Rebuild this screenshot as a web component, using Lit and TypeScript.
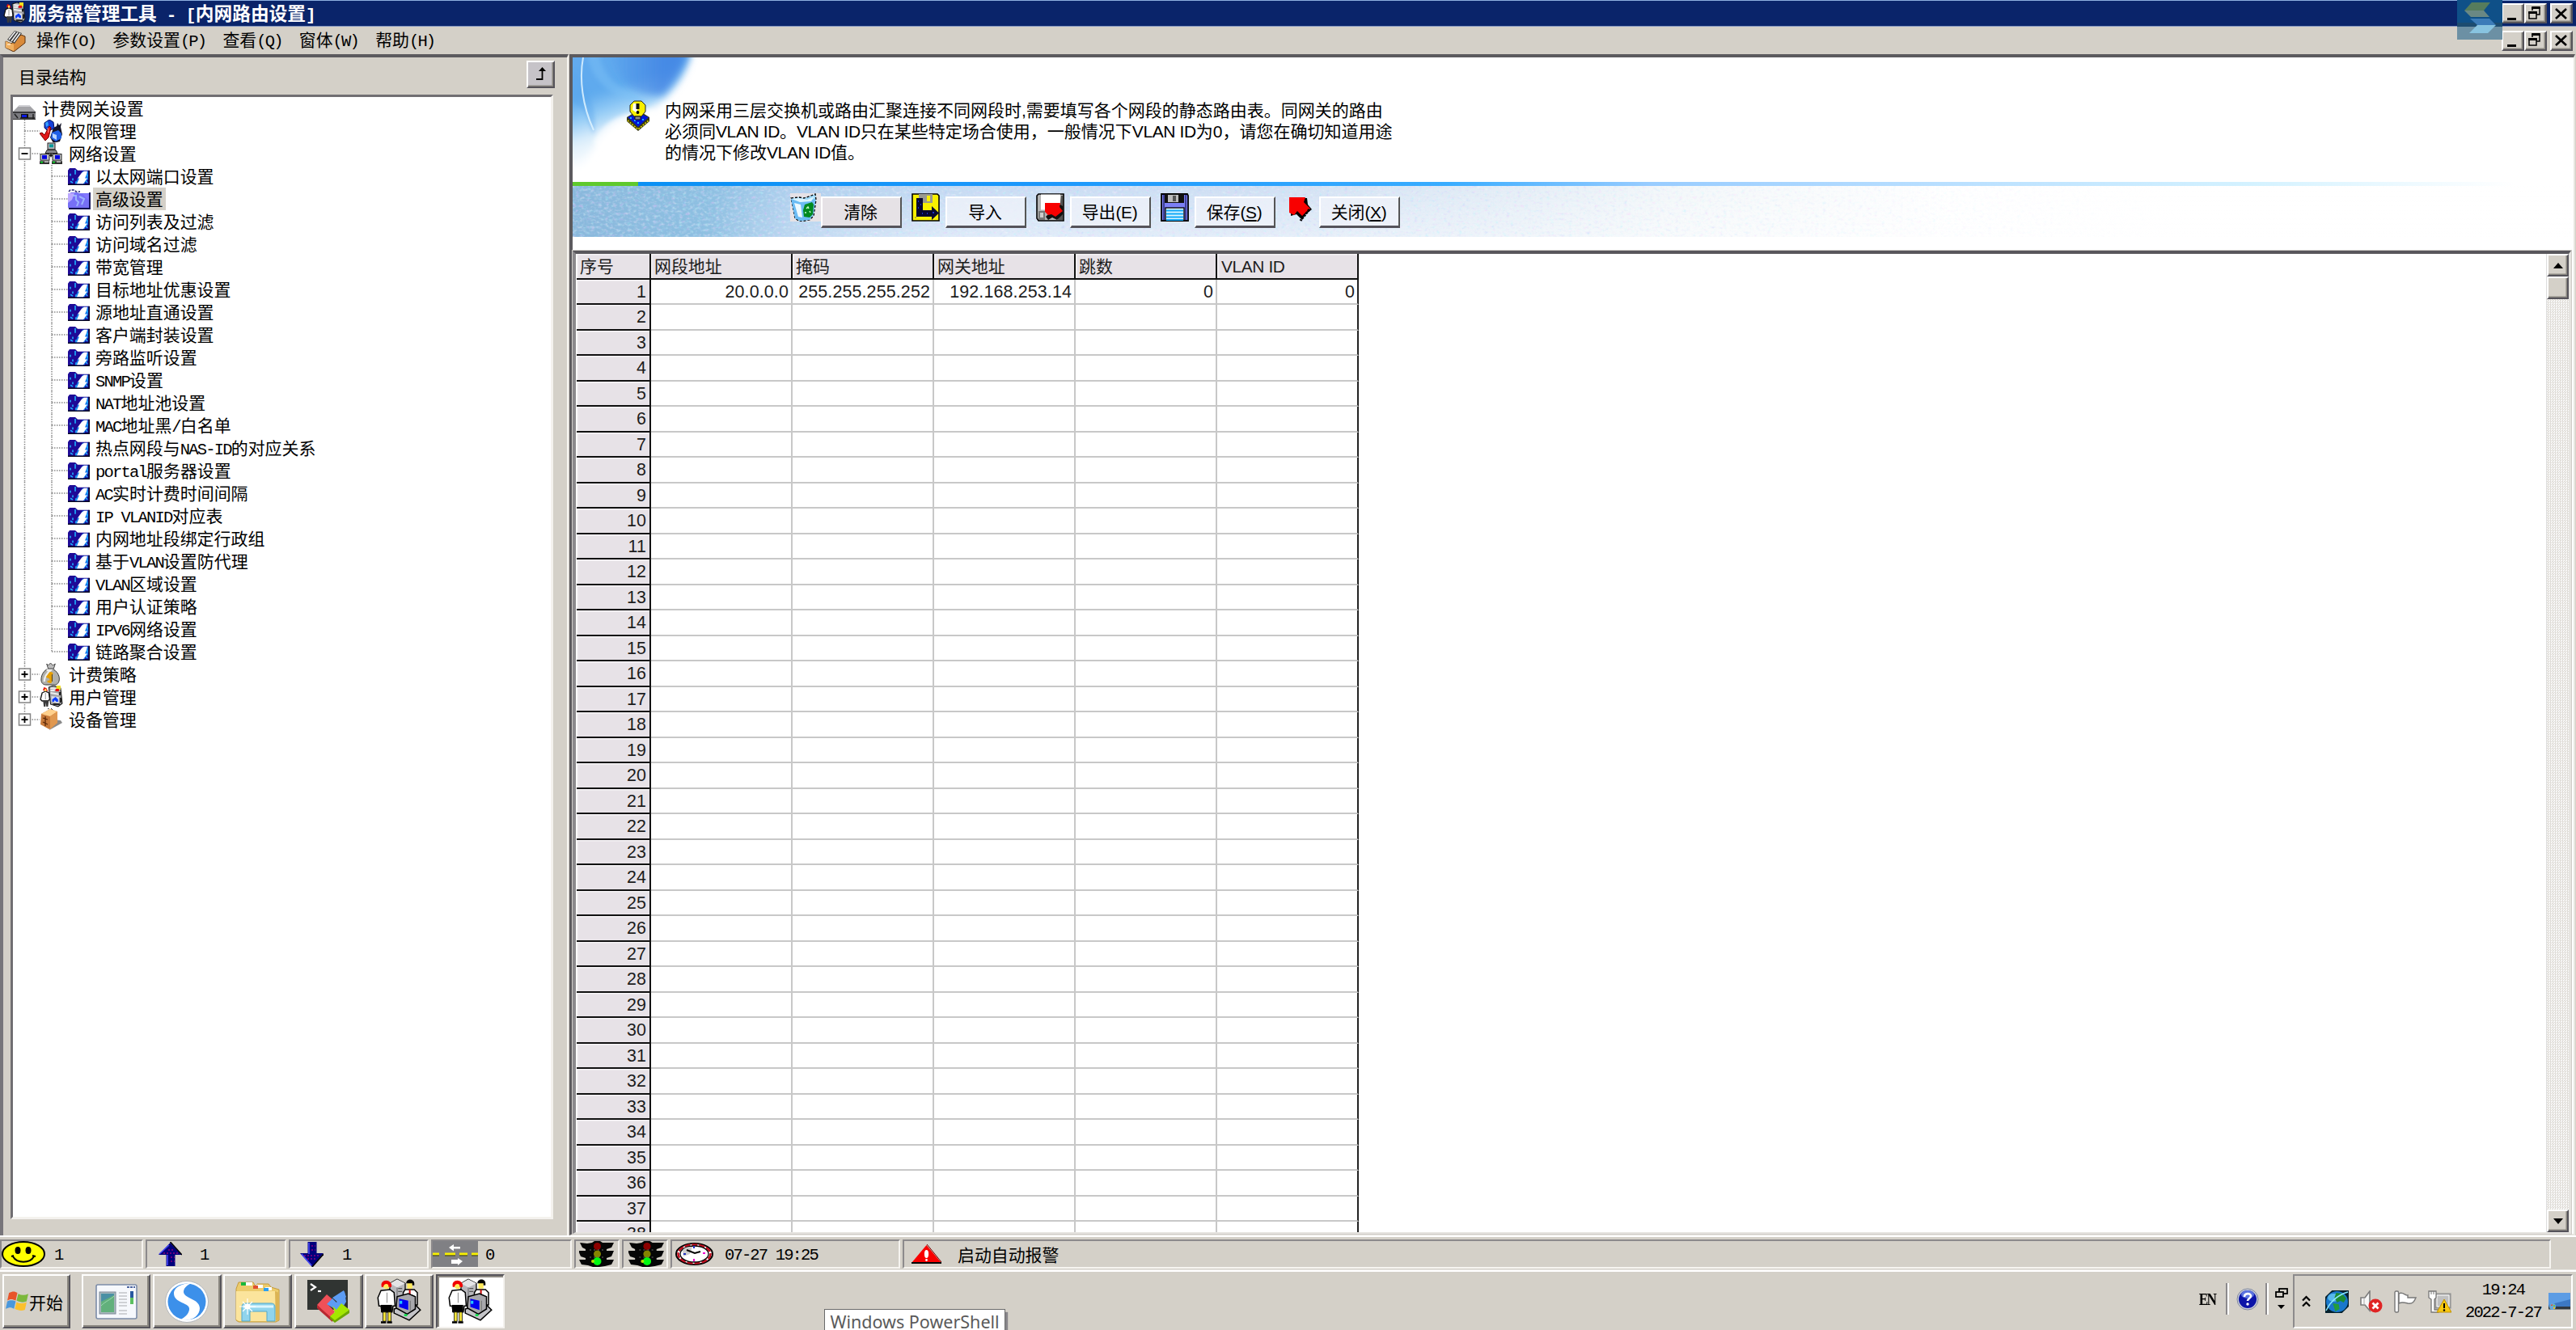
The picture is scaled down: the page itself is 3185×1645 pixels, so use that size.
import { LitElement, html, svg, css } from "lit";
import { customElement } from "lit/decorators.js";
import { classMap } from "lit/directives/class-map.js";

/** Splits a label so that Latin runs are set in half-width characters. */
const mix = (text: string) =>
  text
    .split(/([\x20-\x7e]+)/)
    .filter((s) => s !== "")
    .map((s) => (/^[\x20-\x7e]+$/.test(s) ? html`<span class="half">${s}</span>` : s));

const clerks = svg`
  <path d="M13 5l7-4 8 4v18l-8 5-8-5z" fill="#b8b8bc" stroke="#000" stroke-width="1"/>
  <path d="M13 5l7 4 8-4-8-4z" fill="#e4e4e6"/><path d="M20 9v18" stroke="#77777c"/>
  <path d="M21 10h4M21 13h4" stroke="#555"/>
  <path d="M28 11h9l3 3v12H26V14z" fill="#fff" stroke="#000" stroke-width="1.2"/>
  <rect x="30" y="4" width="5" height="6" fill="#ffe95a"/><path d="M29 5c0-5 8-5 8 0v2h-2V5h-4z" fill="#000"/>
  <path d="M32.5 11v8" stroke="#c00000" stroke-width="1.6"/>
  <path d="M17 30l20-5 6 6-11 10-15-7z" fill="#c4c4c8" stroke="#000" stroke-width="1.2"/>
  <path d="M20 18l11-3 7 3v12l-8 5-11-6z" fill="#a8a8ac" stroke="#000" stroke-width="1.2"/>
  <path d="M22 20l9 2v9l-9-3z" fill="#0000f0"/><rect x="22.500" y="22" width="2.500" height="3" fill="#20c8ff"/>
  <path d="M33 22v10" stroke="#777"/><rect x="27" y="35" width="3" height="2" fill="#00e040"/>
  <path d="M4 12l-3 7 1 8h2l1 6h10l1-6h2l-1-13-4-3z" fill="#fff" stroke="#000" stroke-width="1.2"/>
  <circle cx="9.500" cy="7" r="3.500" fill="#ffe95a"/><path d="M5 8C3 1 15 1 14 8h-2c0-4-5-4-6 0z" fill="#f00000" stroke="#f00000"/>
  <path d="M10 14v10" stroke="#999"/><rect x="4" y="26" width="11" height="7" fill="#000"/>
  <path d="M6 33h3v9H6zM11 33h3v9h-3z" fill="#f5e63c" stroke="#000" stroke-width=".6"/>
  <path d="M4 42h5v2H4zM10 42h5v2h-5z" fill="#000"/>`;

const icons: Record<string, { box: string; art: unknown }> = {
  clerks: { box: "0 0 44 45", art: clerks },
  users: {
    box: "0 0 28 28",
    art: svg`<path d="M11 2l6-2 8 3 2 19-5 4-9-3z" fill="#a4a4a8" stroke="#111"/>
      <path d="M13 3l7 1M13 9l11 2M13 6h5" stroke="#eee" stroke-width="2"/><path d="M24 8v4M25 15v6M16 23h8" stroke="#222" stroke-width="2"/>
      <rect x="20" y="0" width="5" height="5" fill="#f5e020"/><rect x="19" y="4" width="4" height="3" fill="#e00"/>
      <path d="M14 13l9 1v8l-9-2z" fill="#d8dce8"/><path d="M15 17l4-3 3 3v3h-2l-2-2-1 2h-2z" fill="#0a3cff"/>
      <path d="M3 9l4-2 4 2 1 8-2 2H3l-2-2z" fill="#fff" stroke="#111" stroke-width="1.300"/><path d="M7 9v8" stroke="#999"/>
      <path d="M4 6l1-4 3 1 2 4z" fill="#e01010"/><rect x="6" y="4" width="2" height="3" fill="#ffe04a"/>
      <path d="M4 18h7l-1 8H8l-.5-5L7 26H5z" fill="#3a3a3a"/>`,
  },
  menu: {
    box: "0 0 26 27",
    art: svg`<path d="M1 14l7 3 12-11 5 2v8L11 27 1 22z" fill="#d98a3a" stroke="#5a3210"/>
      <path d="M8 17l3 1v8L1 22v-8z" fill="#f0b060"/><path d="M3 12L12 1l9 3-9 13z" fill="#3b3b3b"/>
      <path d="M5 12l8-10M8 14l8-11M11 15l8-11" stroke="#f4f4f4" stroke-width="1.500"/>
      <path d="M3 18h4" stroke="#fff"/>`,
  },
  server: {
    box: "0 0 28 18",
    art: svg`<path d="M0 8L8 0h12l8 8z" fill="#a4a4a8"/><path d="M8 0h12l2 2H6z" fill="#d0d0d4"/>
      <rect x="0" y="8" width="28" height="9" fill="#7b7b80"/><path d="M0 8h28v2H0z" fill="#3b3b3e"/>
      <path d="M2 11l4 5M25 11v6M9 16h18" stroke="#222" stroke-width="1.500"/>
      <rect x="10" y="11" width="9" height="5" fill="#111"/><rect x="11" y="12" width="6" height="3" fill="#0a18e0"/>
      <path d="M0 17.500h28" stroke="#333"/>`,
  },
  rights: {
    box: "0 0 28 28",
    art: svg`<path d="M17 10l4-2 1-4 2 3 3-3-1 5 2 9-3 9-8 2-4-7z" fill="#141428"/>
      <path d="M6 4l6-4 5 3 1 8-8 3-4-4z" fill="#1540d8" stroke="#001060"/><path d="M7 4l3-2 1 5-3 2z" fill="#36a0ff"/>
      <path d="M15 16l8-3 4 4v6l-7 4-6-4z" fill="#2060e8"/><path d="M16 17l5 2v6l-5-3z" fill="#b8d4ff"/>
      <path d="M0 17l3-1 3 3 6-11 2 2-3 12-4 4z" fill="#e01818" stroke="#700"/><path d="M10 10l1 6" stroke="#ff9090"/>`,
  },
  network: {
    box: "0 0 28 29",
    art: svg`<rect x="10" y="1" width="9" height="8" fill="#b8b8bc" stroke="#222"/><rect x="12" y="2.500" width="5" height="4" fill="#0a9a9a"/>
      <path d="M9 10h11l2 4H7z" fill="#8a8a90" stroke="#222"/><path d="M14 14v5M7 20l7-4 7 4" stroke="#111" stroke-width="1.500" fill="none"/>
      <rect x="1" y="15" width="11" height="8" fill="#c0c0c4" stroke="#222"/><rect x="3" y="16.500" width="6" height="5" fill="#0000e0"/>
      <rect x="16" y="15" width="11" height="8" fill="#c0c0c4" stroke="#222"/><rect x="19" y="16.500" width="6" height="5" fill="#0000e0"/>
      <path d="M0 24h12v4H0zM15 24h13v4H15z" fill="#303030"/><path d="M1 25.500h3M16 25.500h3" stroke="#00d020" stroke-width="2"/>
      <path d="M6 25h5M21 25h5" stroke="#ddd" stroke-width="1.500"/>`,
  },
  leaf: {
    box: "0 0 27 24",
    art: svg`<path d="M2 1h7l3 3h14v19H0V4z" fill="#1e0a96"/><path d="M0 23h27V4h-1.500v17.500H0z" fill="#050520"/>
      <path d="M18 5h7v11l-3 1-1 4H9l3-7 3-2z" fill="#1478ec"/><path d="M17 7l3-2h4l-1 4-2 5h3l-5 7h-8l3-7h-2z" fill="#fff"/>
      <path d="M9 3v6M3 8v3M6 14v3M3 18l3 2M10 18v3M24 9v3M22 17l2 3" stroke="#1fb0ff" stroke-width="1.600"/>`,
  },
  folder: {
    box: "0 0 28 25",
    art: svg`<path d="M1 3l2-2h5l2 2h5" stroke="#222070" stroke-width="1.500" fill="none" stroke-dasharray="3 1.500"/>
      <path d="M0 5h2l2-1h8l2 1h13v18H0z" fill="#7670f6"/><path d="M0 5h8l-3 8-5 4z" fill="#bca8ff"/>
      <path d="M6 8h4v5l3 3-2 5M14 9l6 3-3 7" stroke="#a8c4ff" stroke-width="2" fill="none" opacity=".8"/>
      <path d="M18 6h8v8z" fill="#8478ff"/><path d="M1 24h26V4" stroke="#0a0a50" stroke-width="1.800" fill="none"/>`,
  },
  money: {
    box: "0 0 28 28",
    art: svg`<path d="M9 1l2 2 3-3 3 3 3-2-2 6h-7z" fill="#bdbdbd" stroke="#444"/>
      <path d="M9 8h9c6 4 8 9 7 14-1 4-4 5-6 5H8c-3 0-6-2-6-6C2 16 4 11 9 8z" fill="#b0b0ac" stroke="#333"/>
      <path d="M9 9h5c-5 4-8 9-8 14" stroke="#eee" stroke-width="2.500" fill="none"/>
      <path d="M17 13h-4l-3 4 5 2-1 4h-4M14 11v14" stroke="#e8a000" stroke-width="2.600" fill="none"/><path d="M16 14v9" stroke="#5a3c00"/>`,
  },
  crate: {
    box: "0 0 28 28",
    art: svg`<path d="M12 27l16-9-2-3-9-1z" fill="#8a8a8a"/>
      <path d="M2 7l11-6 9 3v14l-10 8-11-6z" fill="#c87a3a"/><path d="M2 7l11-6 9 3-9 6z" fill="#ffd08c"/>
      <path d="M13 10l9-6v14l-9 8z" fill="#e09850"/><path d="M10 1l3-2 3 3" stroke="#333" fill="none"/>
      <path d="M4 12l6 2M4 17l6 3M7 10v12" stroke="#5a2808" stroke-width="1.300"/>`,
  },
  notice: {
    box: "0 0 28 39",
    art: svg`<path d="M0 22l8-5 6 5 6-5 8 5v5L14 39 0 27z" fill="#3a3a10"/><path d="M1 22l7-3 6 6 6-6 7 3-13 12z" fill="#0018d8"/>
      <path d="M1 26l13 11 13-11" stroke="#e0d800" fill="none" stroke-width="1.500" stroke-dasharray="2 1.500"/>
      <path d="M4 23h2M9 26h2M19 25h2M13 29h2" stroke="#20b0ff" stroke-width="2"/>
      <path d="M9 2h9l5 5v8l-5 6h-9l-5-6V7z" fill="#f8f000" stroke="#222"/><path d="M8 5h5v12l-6-4z" fill="#fff"/>
      <path d="M13.500 5v7" stroke="#111" stroke-width="4"/><circle cx="13.500" cy="16" r="1.900"/><path d="M10 21h7v4h-7z" fill="#888" stroke="#111"/>`,
  },
  recycle: {
    box: "0 0 33 35",
    art: svg`<path d="M1 6l10-1 6 1 9-3 5-2 1 7-3 20-5 5-12 2-6-4z" fill="#9cd8f8" stroke="#000" stroke-width="1.300" stroke-dasharray="3 2"/>
      <path d="M1 7l12 4 18-4-2 17-5 9-12 1-6-3z" fill="#6cbcf4"/><path d="M5 12l8 2 2 16-5-1z" fill="#eefaff"/>
      <path d="M2 7l9-1 10 2 9-4-4 6-14 1z" fill="#dcf4ff"/>
      <path d="M18 14l9-3 2 3-1 12-4 4-7-1-1-8z" fill="#008a20"/><path d="M20 19l2-2 1 2M18 24h2M24 22l1 2" stroke="#c8ffd0" stroke-width="1.500" fill="none"/>`,
  },
  importDisk: {
    box: "0 0 35 35",
    art: svg`<path d="M1 1h31l2 2v31H1z" fill="#f8f000" stroke="#000" stroke-width="1.600"/>
      <path d="M9 1h17v11H9z" fill="#9a9a90"/><rect x="19" y="3" width="4" height="7" fill="#f8f000"/>
      <path d="M6 6h8v15h11v-5l9 8.500-9 8.500v-4H6z" fill="#080830"/><path d="M8 10h1M11 14h1M8 18h1M13 25h1M19 25h1M26 24h2" stroke="#2040ff" stroke-width="1.500"/>
      <path d="M4 30h2" stroke="#777"/>`,
  },
  exportDisk: {
    box: "0 0 35 35",
    art: svg`<path d="M3 1h31v33H3l-2-3V3z" fill="#b4b4b4" stroke="#000" stroke-width="1.600"/>
      <path d="M6 1.500h24v19H6z" fill="#fff"/><path d="M3 22h8v11H3z" fill="#777"/><path d="M5 24h4v6H5z" fill="#ccc"/>
      <path d="M31 3h2v30h-6z" fill="#555"/><path d="M13 14h17l3 2v10l-7 7-6-3-5 3-3-4 4-4z" fill="#111"/>
      <path d="M11 12h19l-1 5 4 5-9 7-5-3-4 1-4-4z" fill="#f80000"/>`,
  },
  floppy: {
    box: "0 0 35 35",
    art: svg`<path d="M1 1h32l1 2v31H1z" fill="#7c80f4" stroke="#000" stroke-width="1.800"/>
      <rect x="5" y="1" width="24" height="11" fill="#111"/><rect x="9" y="2" width="13" height="9" fill="#bcbcbc"/><rect x="15" y="3" width="4" height="7" fill="#555"/>
      <path d="M4 1v33M31 1v33" stroke="#000038"/><rect x="6" y="18" width="23" height="16" fill="#d8f4ff" stroke="#000" stroke-width="1.300"/>
      <path d="M7 21.500h21M7 25.500h21M7 29.500h21M7 33h21" stroke="#10a8f8" stroke-width="2"/>`,
  },
  exit: {
    box: "0 0 28 31",
    art: svg`<path d="M2 2h20l1 8 5 6-9 7-3 6-7-7-7 2z" fill="#000"/><path d="M0 1h20l-2 6 8 8-10 9-6-6-4 5-6-3z" fill="#f80000"/>
      <path d="M25 16l-9 11-2 3" stroke="#000" stroke-width="3" stroke-dasharray="3 1" fill="none"/>`,
  },
  smile: {
    box: "0 0 54 32",
    art: svg`<ellipse cx="27" cy="16" rx="26" ry="15" fill="#ffff00" stroke="#000" stroke-width="2"/>
      <ellipse cx="20" cy="11.500" rx="3.500" ry="4.500"/><ellipse cx="33" cy="11.500" rx="3.500" ry="4.500"/>
      <path d="M14 19c5 9 21 9 26 0M12 19l3-1M38 18l4 1" stroke="#000" stroke-width="2" fill="none"/>`,
  },
  up: {
    box: "0 0 29 30",
    art: svg`<path d="M14.500 1L29 16H20.500V30H9.500V16H0z" fill="#00007c"/><path d="M14.500 0L29 16" stroke="#000" stroke-width="1.500"/>
      <path d="M1 15L13 4M11 16v13" stroke="#4848f8" stroke-width="1.600"/><path d="M12 10h8M6 14h18M15 19h5M15 24h5" stroke="#8c007c" stroke-width="1.400" stroke-dasharray="2 2"/>`,
  },
  down: {
    box: "0 0 29 31",
    art: svg`<path d="M9.500 0H20.500V14H29L15 31 0 14H9.500z" fill="#00007c"/><path d="M29 15L15 31" stroke="#000" stroke-width="1.500"/>
      <path d="M11 1v14M2 15l12 14" stroke="#4848f8" stroke-width="1.600"/><path d="M14 5h5M14 10h5M5 17h19M9 21h11" stroke="#8c007c" stroke-width="1.400" stroke-dasharray="2 2"/>`,
  },
  road: {
    box: "0 0 56 32",
    art: svg`<rect width="56" height="32" fill="#808084"/><path d="M0 16h8M15 16h13M33 16h10M48 16h8" stroke="#f8f000" stroke-width="3"/>
      <path d="M0 18h8M15 18h13M33 18h10M48 18h8" stroke="#404000" stroke-width="1"/>
      <path d="M20 8l6-4v3h8v2.500h-8v3z" fill="#fff"/><path d="M37 25l-6-4v2h-8v5h8v2z" fill="#fff"/>`,
  },
  signal: {
    box: "0 0 45 32",
    art: svg`<path d="M10 3l6-1 3-2h7l3 2 14 0-3 6-6 2v2h9l-3 7-6 2v2h9l-3 6-8 2-7 1-3 1-5-1-6-2-8-1-3-6h8v-2l-6-2-3-7h9v-2L4 8 1 2z" fill="#060606"/>
      <circle cx="22.500" cy="6.500" r="4.500" fill="#8c0000"/><circle cx="22.500" cy="16" r="4.500" fill="#848400"/>
      <circle cx="22.500" cy="25" r="5" fill="#00f810"/><circle cx="17" cy="25" r="2" fill="#b4e000"/>
      <path d="M13 11h18M13 20h18" stroke="#666" stroke-dasharray="2 3"/>`,
  },
  clock: {
    box: "0 0 47 28",
    art: svg`<ellipse cx="23.500" cy="14" rx="22.500" ry="13" fill="#fff" stroke="#000" stroke-width="2"/>
      <ellipse cx="23.500" cy="14" rx="20" ry="11.500" fill="#fff" stroke="#c01020" stroke-width="2.600" stroke-dasharray="7 2"/>
      <ellipse cx="23.500" cy="14" rx="17.500" ry="10" fill="#fff" stroke="#000" stroke-width="1.300"/>
      <path d="M9 9c3-4 8-4 12-4l-3 9-8 3z" fill="#ccc"/>
      <path d="M14 9l10 4 7-2" stroke="#000" stroke-width="2" fill="none"/>
      <path d="M23 4v3M10 14h3" stroke="#2030c0" stroke-width="2"/><path d="M34 13h3M23 20v3" stroke="#f000d0" stroke-width="2"/>`,
  },
  alarm: {
    box: "0 0 37 24",
    art: svg`<path d="M18.500 1L37 23H0z" fill="#f80000"/><path d="M0 23h37" stroke="#000" stroke-width="2"/><path d="M19 0l18 22" stroke="#700" stroke-width="1"/>
      <ellipse cx="18.500" cy="12" rx="2.600" ry="5" fill="#fff"/><circle cx="18.500" cy="19.500" r="1.400" fill="#fff"/>`,
  },
  windows: {
    box: "0 0 28 26",
    art: svg`<path d="M4 3c4-2 7-2 10 0l-2 9c-4-2-7-2-10 0z" fill="#e8552a"/><path d="M15 4c4 2 8 2 12 0l-2 9c-4 2-8 1-12-1z" fill="#7cb83c"/>
      <path d="M2 13c4-2 7-1 10 0l-2 9c-3-2-6-2-10 0z" fill="#4a98dc"/><path d="M13 14c4 2 8 2 12 0l-2 9c-4 2-8 1-12-1z" fill="#fbc02c"/>`,
  },
  appWindow: {
    box: "0 0 52 44",
    art: svg`<rect x="1" y="1" width="50" height="42" rx="2" fill="#f6f8fc" stroke="#7c8ca8" stroke-width="1.600"/>
      <path d="M39 4h3M43 4h3M47 4h2" stroke="#4c64a0" stroke-width="2"/><rect x="5" y="10" width="20" height="27" fill="#a8b8bc" stroke="#7c8898"/>
      <path d="M7 12h16v23H7z" fill="#4a90a4"/><path d="M7 22l16-8v21H7z" fill="#62b07c"/><path d="M7 27c6-6 11-7 16-12" stroke="#9cd8b0" fill="none"/>
      <path d="M29 11h10M29 15h10M29 19h10M29 23h10M29 27h10M29 33h10M29 37h10" stroke="#c2c4c8" stroke-width="1.500"/>
      <rect x="43" y="9" width="4" height="10" fill="#2858a0"/><rect x="43" y="17" width="4" height="8" fill="#5cc060"/>`,
  },
  sogou: {
    box: "0 0 54 52",
    art: svg`<ellipse cx="27" cy="26" rx="26.500" ry="25.500" fill="#fff" stroke="#b4b8bc"/><ellipse cx="27" cy="26" rx="23.500" ry="22.500" fill="#3c90ea"/>
      <path d="M33 3c-10 0-22 4-22 13 0 12 21 11 19 20-1 6-6 9-10 12 12 3 23-4 23-14 0-12-21-12-20-21 1-5 5-8 10-10z" fill="#fff"/>`,
  },
  explorer: {
    box: "0 0 56 52",
    art: svg`<path d="M1 10l3-8h18l3 5 2-3h14l3 4 10 3v38l-4 2H4l-3-2z" fill="#eccb6c" stroke="#c49c3c"/>
      <path d="M1 13h48l2 4v33H5l-4-2z" fill="#fbe49c"/><path d="M49 13l5 2v33l-4 2z" fill="#dcb454"/>
      <path d="M12 4h9M26 7h8M37 10h8" stroke="#fff" stroke-width="4"/>
      <rect x="7" y="2" width="6" height="4" fill="#18b83c"/><rect x="22" y="6" width="6" height="4" fill="#e05030"/><rect x="35" y="9" width="6" height="4" fill="#2ca0f0"/>
      <path d="M8 33c0-4 2-5 5-5h31c4 0 5 2 5 5v17H39V38H18v12H8z" fill="#90d4ec" stroke="#50a8cc"/><path d="M10 32h37" stroke="#dcf6ff" stroke-width="3"/>
      <path d="M15 22v20M5 32h20M9 26l12 12M21 26L9 38" stroke="#fff" stroke-width="1.200"/><circle cx="15" cy="32" r="3.500" fill="#fff"/>`,
  },
  terminal: {
    box: "0 0 52 53",
    art: svg`<rect x="0" y="0" width="50" height="37" fill="#303432"/><path d="M4 5l6 4-6 4" stroke="#fff" stroke-width="2.200" fill="none"/><path d="M13 14h4" stroke="#fff" stroke-width="2.200"/>
      <path d="M12 31L24 18l7 6-6 6 9 9-3 6 3 5-3 1z" fill="#f05058"/><path d="M12 31l19 17v4L12 35z" fill="#b82830"/>
      <path d="M24 30l7-7 5 5 6-9 4-5 1 7 1 6-3 5-4 2-4 4z" fill="#5c9cf4"/><path d="M31 22l14-9 3 8-8 9z" fill="#5c9cf4"/>
      <path d="M31 32l5 5 6-8 10 8-18 14-6-6 6-5z" fill="#a4e800"/><path d="M52 37v4L34 53l-6-5v-3l6 5z" fill="#6ca800"/>`,
  },
  help: {
    box: "0 0 28 28",
    art: svg`<circle cx="14" cy="14" r="13" fill="#c8ccd8" stroke="#8088a0"/><circle cx="14" cy="14" r="11" fill="#0c14a8"/>
      <ellipse cx="14" cy="8" rx="8" ry="5" fill="#5c74e0"/><path d="M10 11c0-5 8-5 8-1 0 3-4 3-4 6" stroke="#fff" stroke-width="2.600" fill="none"/><circle cx="14" cy="20" r="1.700" fill="#fff"/>`,
  },
  options: {
    box: "0 0 16 28",
    art: svg`<rect x="5" y="1" width="10" height="6" fill="none" stroke="#000" stroke-width="1.800"/><rect x="1" y="5" width="9" height="6" fill="#d4d0c8" stroke="#000" stroke-width="1.800"/>
      <path d="M3 21h9l-4.500 5z"/>`,
  },
  chevrons: { box: "0 0 11 15", art: svg`<path d="M1 6.500l4.500-4.500L10 6.500M1 13.500L5.500 9l4.500 4.500" stroke="#000" stroke-width="2.200" fill="none"/>` },
  globe: {
    box: "0 0 28 28",
    art: svg`<path d="M8 0h20v20l-8 8H0V8z" fill="#04202c"/><circle cx="14" cy="14" r="13" fill="#1a78cc"/><ellipse cx="10" cy="9" rx="7" ry="5" fill="#58b8ec"/>
      <path d="M13 3l7 1 5 6-3 5-4-2-4 2-3-6z" fill="#1c8c34"/><path d="M9 16l7 1 1 6-5 3z" fill="#249c3c"/>
      <path d="M1 25C6 14 14 6 27 2" stroke="#8ce8ff" stroke-width="1.400" fill="none"/>`,
  },
  speaker: {
    box: "0 0 28 28",
    art: svg`<path d="M1 9h5l6-8v24l-6-7H1z" fill="#f8f8f8" stroke="#7c7c7c" stroke-width="1.600"/><path d="M5 9v9" stroke="#aaa"/>
      <circle cx="19" cy="19" r="8.500" fill="#e02424"/><path d="M15.500 15.500l7 7M22.500 15.500l-7 7" stroke="#fff" stroke-width="2.800"/>`,
  },
  flag: {
    box: "0 0 28 28",
    art: svg`<path d="M6 4c5-3 8 3 11 2v3l10 0c-2 5-4 8-10 7-4-1-7-2-11 0z" fill="#fff" stroke="#777" stroke-width="1.400"/><rect x="1" y="1" width="4.500" height="26" rx="1.500" fill="#fff" stroke="#777" stroke-width="1.400"/>`,
  },
  lan: {
    box: "0 0 29 28",
    art: svg`<rect x="9" y="4" width="19" height="18" fill="#a8a8a8" stroke="#888"/><path d="M11 6h15v14H11z" fill="#c0c0c0" stroke="#fff"/>
      <path d="M1 1h9v8l-2 2v13h5v3H4V11L1 9z" fill="#fff" stroke="#777" stroke-width="1.300"/><path d="M4 1v4M7 1v4" stroke="#777"/>
      <path d="M20 11l9 16H11z" fill="#f8c810" stroke="#c09000"/><path d="M20 16v6" stroke="#000" stroke-width="2"/><circle cx="20" cy="24.500" r="1.200"/>`,
  },
  desktop: {
    box: "0 0 28 22",
    art: svg`<rect x="1" y="0" width="27" height="20" fill="#3c78c4"/><path d="M1 0h27v8L1 15z" fill="#5c9ce4"/><rect x="1" y="17" width="27" height="3.500" fill="#303840"/>
      <circle cx="6" cy="17" r="4" fill="#68a8d8"/><path d="M4 15l2-1v2H4z" fill="#e05030"/><path d="M7 15h2v2H7z" fill="#80c040"/><path d="M7 18h2v2H7z" fill="#f8c020"/>`,
  },
  pin: { box: "0 0 12 18", art: svg`<path d="M0 16h7.500V5" stroke="#000" stroke-width="1.800" fill="none"/><path d="M3 6l4.500-5L12 6z"/>` },
  minimize: { box: "0 0 28 24", art: svg`<rect x="7" y="17" width="11" height="3"/>` },
  restore: {
    box: "0 0 28 24",
    art: svg`<path d="M10 8V5h9v8h-4" stroke="#000" stroke-width="1.500" fill="none"/><path d="M9.200 4.500h10.600" stroke="#000" stroke-width="3"/>
      <path d="M6 10h9v8H6z" stroke="#000" stroke-width="1.500" fill="none"/><path d="M5.200 10.500h10.600" stroke="#000" stroke-width="3"/>`,
  },
  close: { box: "0 0 28 24", art: svg`<path d="M7 6l13 12M20 6L7 18" stroke="#000" stroke-width="2.600"/>` },
  logo: {
    box: "0 0 56 49",
    art: svg`<rect width="56" height="49" fill="#0f5088"/><rect y="28" width="56" height="21" fill="#1c4c70"/><path d="M0 33h56v16H0z" fill="#6c90a4"/>
      <path d="M9 13L18 3h23l-8 10z" fill="#567c5c"/><path d="M9 13h24l7 8H17z" fill="#6a8884"/>
      <path d="M16 23h24l8 8H25z" fill="#3c7cb8"/><path d="M25 31h23l-10 10H15z" fill="#88c4e0"/>`,
  },
};

const icon = (name: string, w: number, h: number) =>
  html`<svg class="icon" width=${w} height=${h} viewBox=${icons[name].box} preserveAspectRatio="none">${icons[name].art}</svg>`;

interface TreeNode { label: string; icon: string; level: number; box?: string; last?: boolean; on?: boolean }

const leaves = [
  "以太网端口设置", "高级设置", "访问列表及过滤", "访问域名过滤", "带宽管理", "目标地址优惠设置", "源地址直通设置",
  "客户端封装设置", "旁路监听设置", "SNMP设置", "NAT地址池设置", "MAC地址黑/白名单", "热点网段与NAS-ID的对应关系",
  "portal服务器设置", "AC实时计费时间间隔", "IP VLANID对应表", "内网地址段绑定行政组", "基于VLAN设置防代理",
  "VLAN区域设置", "用户认证策略", "IPV6网络设置", "链路聚合设置",
];

const nodes: TreeNode[] = [
  { label: "计费网关设置", icon: "server", level: 0 },
  { label: "权限管理", icon: "rights", level: 1 },
  { label: "网络设置", icon: "network", level: 1, box: "-" },
  ...leaves.map((label, i) => ({
    label, level: 2, icon: label === "高级设置" ? "folder" : "leaf", on: label === "高级设置", last: i === leaves.length - 1,
  })),
  { label: "计费策略", icon: "money", level: 1, box: "+" },
  { label: "用户管理", icon: "users", level: 1, box: "+" },
  { label: "设备管理", icon: "crate", level: 1, box: "+", last: true },
];

const sizes: Record<string, [number, number]> = {
  server: [28, 18], rights: [28, 28], network: [28, 28], leaf: [27, 23], folder: [28, 25], money: [27, 28], users: [29, 28], crate: [28, 28],
};

@customElement("nav-tree")
export class NavTree extends LitElement {
  static styles = css`
    :host { display: block; flex: 1; background: #fff; font: 20.95px/28px "Noto Sans CJK SC", sans-serif; color: #000; }
    .row { display: flex; height: 28px; align-items: center; white-space: pre; }
    .guide { display: block; flex: none; }
    .icon { display: block; flex: none; }
    .slot { display: flex; align-items: center; flex: none; width: 28px; height: 28px; }
    .label { margin-left: 5px; padding: 0 3px; height: 28px; line-height: 26px; }
    .root .slot { align-items: flex-end; }
    .deep .label { margin-left: 3px; }
    .on .label { background: #d4d0c8; }
    .half { font-family: "Liberation Mono", monospace; font-size: 20.5px; letter-spacing: -1.8px; }
  `;

  guide(x: number, w: number, top: boolean, bottom: boolean, across: boolean, box?: string) {
    return html`<svg class="guide" width=${w} height="28">
      <g stroke="#8a8a8a" stroke-width="1.500" stroke-dasharray="1.500 1.500">
        ${top ? svg`<path d="M${x} 0V14"/>` : ""}${bottom ? svg`<path d="M${x} 14V28"/>` : ""}${across ? svg`<path d="M${x} 14H${w}"/>` : ""}
      </g>
      ${box ? svg`<rect x=${x - 7} y="7" width="14" height="14" fill="#fff" stroke="#848484" stroke-width="1.500"/>
        <path d=${box === "+" ? `M${x - 4} 14h8M${x} 10v8` : `M${x - 4} 14h8`} stroke="#000" stroke-width="1.800"/>` : ""}
    </svg>`;
  }

  render() {
    return nodes.map((n) => {
      const [w, h] = sizes[n.icon];
      return html`<div class=${classMap({ row: true, root: n.level === 0, deep: n.level === 2, on: !!n.on })}>
        ${n.level === 1 ? this.guide(14.5, 33, true, !n.last, true, n.box) : ""}
        ${n.level === 2 ? [this.guide(14.5, 33, true, true, false), this.guide(15, 35, true, !n.last, true)] : ""}
        <span class="slot">${icon(n.icon, w, h)}</span><span class="label">${mix(n.label)}</span>
      </div>`;
    });
  }
}

@customElement("route-grid")
export class RouteGrid extends LitElement {
  static styles = css`
    :host { display: block; flex: none; width: 968px; padding-left: 1px; overflow: hidden; font: 21.4px/31px "Liberation Sans", "Noto Sans CJK SC", sans-serif; color: #1c1c1c; box-sizing: border-box; }
    .row { display: grid; grid-template-columns: 92px repeat(5, 175px); height: 31.5px; }
    .cell { box-sizing: border-box; border-right: 2px solid #c8c8c8; border-bottom: 2px solid #c8c8c8; background: #fff; padding: 0 3px 0 2px; text-align: right; white-space: pre; height: 31.5px; overflow: hidden; letter-spacing: 0.15px; }
    .cell:last-child { border-right-color: #222; }
    .num, .head .cell { background: #e7e2e7; border-right: 2px solid #111; border-bottom: 2px solid #111; box-shadow: inset 1.5px 1.5px 0 #f6f3f6; }
    .num { padding-right: 4px; }
    .head .cell { text-align: left; padding-left: 4px; font-size: 20.9px; line-height: 32px; letter-spacing: 0; }
    .head .latin { letter-spacing: -0.4px; padding-left: 5px; }
  `;

  render() {
    const heads = ["序号", "网段地址", "掩码", "网关地址", "跳数", "VLAN ID"];
    const first = ["20.0.0.0", "255.255.255.252", "192.168.253.14", "0", "0"];
    return html`
      <div class="row head">${heads.map((h) => html`<div class=${classMap({ cell: true, latin: h === "VLAN ID" })}>${h}</div>`)}</div>
      ${Array.from({ length: 38 }, (_, i) => html`<div class="row">
        <div class="cell num">${i + 1}</div>
        ${first.map((v) => html`<div class="cell">${i === 0 ? v : ""}</div>`)}
      </div>`)}`;
  }
}

@customElement("app-root")
export class AppRoot extends LitElement {
  static styles = css`
    :host { display: flex; flex-direction: column; position: relative; width: 3185px; height: 1645px; overflow: hidden; background: #d4d0c8; font: 20.9px/28px "Noto Sans CJK SC", sans-serif; color: #000; box-sizing: border-box; }
    * { box-sizing: border-box; }
    .icon { display: block; flex: none; }
    .half { font-family: "Liberation Mono", monospace; font-size: 20.5px; letter-spacing: -1.85px; white-space: pre; }

    .title { display: flex; align-items: center; height: 33px; background: #0a246a; border-top: 1.5px solid #8fb0e0; border-bottom: 1.5px solid #8094c0; padding: 0 4px; color: #fff; font-weight: 700; font-size: 22.7px; flex: none; }
    .title .caption { margin: 2px 0 0 3px; line-height: 30px; flex: 1; }
    .title .half { font-size: 21px; letter-spacing: -0.6px; }
    .menu { display: flex; align-items: center; height: 34px; padding: 0 4px 0 6px; flex: none; }
    .items { display: flex; gap: 21.2px; margin-left: 13px; flex: 1; line-height: 32px; }
    .winbtns { display: flex; flex: none; }
    .btn { display: flex; align-items: center; justify-content: center; background: #d4d0c8; border: 2px solid; border-color: #fff #55535a #55535a #fff; box-shadow: inset -1.5px -1.5px 0 #8a8780; }
    .winbtns .btn { width: 28px; height: 25px; }
    .winbtns .btn:last-child { margin-left: 4px; }
    .winbtns .icon { margin: -2px; }

    .work { display: flex; flex: none; height: 1463px; border-bottom: 2px solid #fff; }
    .side { display: flex; flex-direction: column; width: 703px; border: solid; border-width: 4px 2px 0 4px; border-color: #5c5a5e #f6f4f0 #fff #77757a; padding: 4px 17px 20px 9px; }
    .sidehead { display: flex; align-items: flex-start; justify-content: space-between; height: 42px; padding: 0 0 0 10px; }
    .sidehead .name { line-height: 39px; }
    .sidehead .btn { width: 35px; height: 34px; background: #c6c3c8; margin-right: -2px; padding-bottom: 3px; }
    .well { display: flex; flex: 1; border: 3px solid; border-color: #706e72 #f4f2ee #f4f2ee #706e72; }
    .main { display: flex; flex-direction: column; flex: none; width: 2480px; margin-left: 1px; border: solid; border-width: 4px 2px 2px 4px; border-color: #5c5a5e #e8e6e0 #e8e6e0 #5c5a5e; background: #fff; }
    .banner { display: flex; height: 154px; flex: none; padding: 52px 0 0 67px; position: relative; }
    .art { position: absolute; left: 0; top: 0; }
    .banner .icon { position: relative; }
    .text { position: relative; margin: 1px 0 0 19px; font: 21px/26px "Liberation Sans", "Noto Sans CJK SC", sans-serif; white-space: pre; }
    .text .vid { letter-spacing: -0.4px; }
    .rule { display: flex; height: 5px; flex: none; }
    .green { width: 81px; background: #5fc92c; }
    .fade { flex: 1; background: linear-gradient(90deg, #0a90f4 0, #1c98fc 500px, #38acff 1000px, #98ccff 1250px, #b4dcff 1550px, #d4f2ff 2000px, #fff 2320px); }
    .tools { display: flex; height: 63px; flex: none; position: relative; padding: 9px 0 0 269px; }
    .tool { position: relative; display: flex; width: 154px; height: 42px; }
    .pic { width: 38px; height: 35px; display: flex; align-items: flex-end; flex: none; }
    .pic .icon { margin-left: -4px; }
    .first .pic .icon { margin-left: 0; }
    .exit .pic { padding-left: 5px; }
    .tool .btn { width: 100px; height: 39px; margin-top: 4px; background: rgba(240, 243, 250, 0.75); font: 20.85px/36px "Liberation Sans", "Noto Sans CJK SC", sans-serif; padding: 2px 2px 0 0; box-shadow: none; border-right-color: #555; border-bottom-width: 3px; }
    .tool .first { background: #e6e2e6; }
    .key { letter-spacing: -0.3px; }
    .frame { display: flex; flex: 1; margin-top: 17px; min-height: 0; border: solid; border-width: 4px 3px 2px 4px; border-color: #59575c #e6e4e0 #e6e4e0 #8b898c; outline: 1px solid #cfccc8; outline-offset: 0; margin-right: 3px; overflow: hidden; }
    .blank { flex: 1; }
    .scroll { width: 28px; display: flex; flex-direction: column; border-left: 1px solid #ddd; background: repeating-conic-gradient(#e0ddd8 0 25%, #fafafa 0 50%) 0 0 / 3px 3px; }
    .scroll .btn { height: 28px; flex: none; }
    .track { flex: 1; }
    .arrow { width: 0; height: 0; border: 6px solid transparent; border-top-width: 0; border-bottom: 7px solid #000; }
    .arrow.dn { border-bottom-width: 0; border-top: 7px solid #000; border-bottom-color: transparent; }

    .status { display: flex; align-items: flex-start; height: 41px; padding-top: 3px; flex: none; border-bottom: 1px solid #e8e6e2; }
    .cell { display: flex; align-items: center; height: 36px; flex: none; border: 2px solid; border-color: #8c8a8c #f6f4f0 #f6f4f0 #8c8a8c; margin-right: 3px; }
    .taskbar { display: flex; height: 74px; border-top: 2px solid #fff; padding: 3px 4px 3px 3px; flex: none; }
    .start, .task { height: 67px; flex: none; display: flex; align-items: center; border: 2px solid; border-color: #fff #55535a #55535a #fff; box-shadow: inset -2px -2px 0 #8a8780; }
    .start { width: 84px; padding-left: 2px; margin-right: 14px; }
    .task { width: 85px; margin-right: 2.5px; justify-content: center; }
    .task.down { background: #fff; border-color: #55535a #f4f2ee #f4f2ee #55535a; box-shadow: inset 2px 2px 0 #8a8780; }
    .grow { flex: 1; }
    .lang { display: flex; align-items: center; height: 61px; }
    .en { font: 700 20px/28px "Liberation Serif", serif; letter-spacing: -2px; display: inline-block; transform: scaleX(0.86); }
    .bar { width: 4px; height: 39px; border-left: 2px solid #8c8a8c; border-right: 2px solid #fff; }
    .tray { display: flex; align-items: center; width: 346px; height: 67px; border: 2px solid; border-color: #8c8a8c #fff #fff #8c8a8c; padding-left: 9px; }
    .tray .icon { margin-right: 14px; }
    .tray .icon:first-child { margin-right: 18px; }
    .when { display: flex; flex-direction: column; align-items: center; width: 96px; margin: 0 7px 0 2px; line-height: 28px; }
    .tray .when + .icon { margin-right: 0; margin-top: 0; }
    .logo { position: absolute; left: 3038px; top: 0; }
    .tip { position: absolute; left: 1019px; top: 1619px; width: 224px; height: 30px; background: #fff; border: 1.5px solid #6a6a6a; box-shadow: 3px 4px 1px #88868a; color: #5a5a5a; font: 21.5px/29px "Noto Sans", sans-serif; text-align: center; white-space: pre; }
  `;

  winButtons() {
    return html`<div class="winbtns">${["minimize", "restore", "close"].map((n) => html`<span class="btn">${icon(n, 28, 24)}</span>`)}</div>`;
  }

  swirl() {
    return html`<svg class="art" width="190" height="150">
      <defs>
        <linearGradient id="sky" x1="20" y1="0" x2="60" y2="120" gradientUnits="userSpaceOnUse"><stop offset="0" stop-color="#62aaee"/><stop offset=".35" stop-color="#5eaaee"/><stop offset=".55" stop-color="#94ccf6"/><stop offset=".75" stop-color="#dceefb"/><stop offset="1" stop-color="#fff"/></linearGradient>
        <linearGradient id="deep" x1="40" y1="0" x2="110" y2="0" gradientUnits="userSpaceOnUse"><stop offset="0" stop-color="#3f80e2" stop-opacity="0"/><stop offset="1" stop-color="#3f80e2" stop-opacity=".75"/></linearGradient>
        <filter id="soft" x="-30%" y="-30%" width="160%" height="160%"><feGaussianBlur stdDeviation="5"/></filter>
        <filter id="mild" x="-30%" y="-30%" width="160%" height="160%"><feGaussianBlur stdDeviation="2.500"/></filter>
      </defs>
      <path d="M-20 -30H152C148 0 138 26 120 44C108 60 84 68 58 76C40 86 24 112 12 136L-20 140z" fill="url(#sky)" filter="url(#soft)"/>
      <path d="M30 -30H148C142 0 130 28 112 46C88 50 50 40 40 -30z" fill="url(#deep)" filter="url(#soft)"/>
      <g filter="url(#mild)">
        <path d="M18 -6C22 30 50 52 90 56L78 46C52 36 36 20 32 -6z" fill="#7cc0f6" opacity=".45"/>
        <path d="M0 16C20 36 32 66 26 96L14 66L0 54z" fill="#58a6ea" opacity=".4"/>
        <path d="M26 104C36 80 60 68 100 64L110 90L40 124z" fill="#fff" opacity=".6"/>
      </g>
      <path d="M13 0C8 26 12 60 26 90" stroke="#e0f4ff" stroke-width="2" fill="none" opacity=".85"/>
    </svg>`;
  }

  grain() {
    return html`<svg class="art" width="2474" height="63" preserveAspectRatio="none">
      <defs>
        <linearGradient id="wash" x1="0" x2="1700" y1="0" y2="0" gradientUnits="userSpaceOnUse">
          <stop offset="0" stop-color="#8ab8dc"/><stop offset=".1" stop-color="#8ec0e2"/><stop offset=".16" stop-color="#b0d0ee"/><stop offset=".3" stop-color="#c8dcf4"/>
          <stop offset=".5" stop-color="#d0e0f4"/><stop offset=".66" stop-color="#e2ecf6"/><stop offset=".8" stop-color="#f4f8fa"/><stop offset="1" stop-color="#fff"/>
        </linearGradient>
        <linearGradient id="lift" x1="0" x2="0" y1="0" y2="1"><stop offset="0" stop-color="#fff" stop-opacity="0"/><stop offset="1" stop-color="#fff" stop-opacity=".45"/></linearGradient>
        <linearGradient id="in" x1="150" x2="450" y1="0" y2="0" gradientUnits="userSpaceOnUse"><stop offset="0" stop-color="#000"/><stop offset="1" stop-color="#fff"/></linearGradient>
        <linearGradient id="out" x1="0" x2="2000" y1="0" y2="0" gradientUnits="userSpaceOnUse"><stop offset="0" stop-color="#fff"/><stop offset=".6" stop-color="#bbb"/><stop offset="1" stop-color="#000"/></linearGradient>
        <filter id="dots" x="0" y="0" width="1" height="1">
          <feTurbulence type="fractalNoise" baseFrequency=".22 .3" numOctaves="2" seed="4"/>
          <feColorMatrix values="1.400 0 0 0 0  0 1.200 0 0 .2  0 0 .3 0 .8  0 0 2.500 0 -1"/>
        </filter>
        <mask id="edge"><rect width="2474" height="63" fill="url(#out)"/></mask>
        <mask id="ramp"><rect width="2474" height="63" fill="url(#in)"/></mask>
      </defs>
      <rect width="2474" height="63" fill="url(#wash)"/><g mask="url(#ramp)"><rect width="2474" height="63" fill="url(#lift)"/></g>
      <g mask="url(#edge)"><rect width="2000" height="63" filter="url(#dots)" opacity=".42"/></g>
    </svg>`;
  }

  tool(name: string, w: number, h: number, label: unknown, extra = "") {
    return html`<div class="tool ${extra === "first" ? "" : extra}"><span class="pic ${extra}">${extra === "first" ? html`<span style="margin-left:4px">${icon(name, w, h)}</span>` : icon(name, w, h)}</span><span class="btn ${extra}">${label}</span></div>`;
  }

  stat(width: number, lead: number, name: string, w: number, h: number, gap: number, text: string) {
    return html`<div class="cell" style="width:${width}px;padding-left:${lead}px">${icon(name, w, h)}<span style="margin-left:${gap}px">${mix(text)}</span></div>`;
  }

  render() {
    const vid = html`<span class="vid">VLAN ID</span>`;
    return html`
      <div class="title">${icon("users", 28, 27)}<span class="caption">${mix("服务器管理工具 - [内网路由设置]")}</span>${this.winButtons()}</div>
      <div class="menu">${icon("menu", 26, 27)}
        <div class="items">${["操作(O)", "参数设置(P)", "查看(Q)", "窗体(W)", "帮助(H)"].map((m) => html`<span>${mix(m)}</span>`)}</div>
        ${this.winButtons()}
      </div>
      <div class="work">
        <div class="side">
          <div class="sidehead"><span class="name">目录结构</span><span class="btn">${icon("pin", 12, 18)}</span></div>
          <div class="well"><nav-tree></nav-tree></div>
        </div>
        <div class="main">
          <div class="banner">${this.swirl()}${icon("notice", 28, 39)}
            <div class="text"><div>内网采用三层交换机或路由汇聚连接不同网段时,需要填写各个网段的静态路由表。同网关的路由</div><div>必须同${vid}。${vid}只在某些特定场合使用，一般情况下${vid}为0，请您在确切知道用途</div><div>的情况下修改${vid}值。</div></div>
          </div>
          <div class="rule"><span class="green"></span><span class="fade"></span></div>
          <div class="tools">${this.grain()}
            ${this.tool("recycle", 33, 35, "清除", "first")}
            ${this.tool("importDisk", 35, 35, "导入")}
            ${this.tool("exportDisk", 35, 35, html`导出<span class="key">(E)</span>`)}
            ${this.tool("floppy", 35, 35, html`保存<span class="key">(<u>S</u>)</span>`)}
            ${this.tool("exit", 28, 31, html`关闭<span class="key">(<u>X</u>)</span>`, "exit")}
          </div>
          <div class="frame">
            <route-grid></route-grid><div class="blank"></div>
            <div class="scroll"><span class="btn"><i class="arrow"></i></span><span class="btn"></span><span class="track"></span><span class="btn"><i class="arrow dn"></i></span></div>
          </div>
        </div>
      </div>
      <div class="status">
        ${this.stat(177, 0, "smile", 54, 32, 11, "1")}
        ${this.stat(174, 14, "up", 29, 30, 22, "1")}
        ${this.stat(173, 12, "down", 29, 31, 23, "1")}
        ${this.stat(174, 0, "road", 56, 32, 9, "0")}
        ${this.stat(56, 4, "signal", 45, 32, 0, "")}
        ${this.stat(57, 6, "signal", 46, 32, 0, "")}
        ${this.stat(284, 4, "clock", 47, 28, 14, "07-27 19:25")}
        ${this.stat(2038, 9, "alarm", 37, 24, 20, "启动自动报警")}
      </div>
      <div class="taskbar">
        <div class="start">${icon("windows", 29, 27)}<span>开始</span></div>
        <div class="task">${icon("appWindow", 52, 44)}</div>
        <div class="task">${icon("sogou", 54, 52)}</div>
        <div class="task">${icon("explorer", 56, 52)}</div>
        <div class="task">${icon("terminal", 52, 53)}</div>
        <div class="task">${icon("clerks", 55, 57)}</div>
        <div class="task down">${icon("clerks", 55, 57)}</div>
        <span class="grow"></span>
        <div class="lang"><span class="en">EN</span><span class="bar" style="margin:0 9px 0 11px"></span>${icon("help", 28, 28)}<span class="bar" style="margin:0 8px"></span>${icon("options", 16, 28)}</div>
        <div class="tray" style="margin-left:6px">${icon("chevrons", 11, 15)}${icon("globe", 29, 28)}${icon("speaker", 28, 28)}${icon("flag", 28, 28)}${icon("lan", 29, 28)}
          <div class="when"><span class="half">19:24</span><span class="half">2022-7-27</span></div>${icon("desktop", 28, 22)}
        </div>
      </div>
      <span class="logo">${icon("logo", 56, 49)}</span>
      <div class="tip">Windows PowerShell</div>`;
  }
}
